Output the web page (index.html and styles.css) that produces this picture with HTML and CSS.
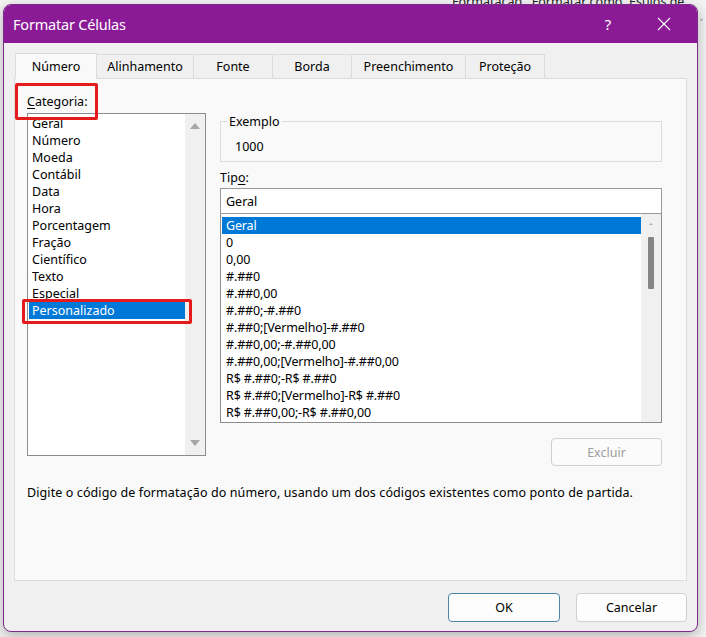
FILE: index.html
```html
<!DOCTYPE html>
<html lang="pt-BR">
<head>
<meta charset="utf-8">
<title>Formatar Células</title>
<link rel="stylesheet" href="styles.css">
</head>
<body>
<div class="ribbon-bg">
  <span class="rb-text">Formatação&nbsp;&nbsp; Formatar como&nbsp; Estilos de</span>
  <span class="rb-caret">˅</span>
</div>

<div class="window">
  <div class="titlebar">
    <span class="title">Formatar Células</span>
    <span class="tb-help">?</span>
    <span class="tb-close">
      <svg width="14" height="14" viewBox="0 0 14 14"><path d="M1 1 L13 13 M13 1 L1 13" stroke="#fff" stroke-width="1.1" fill="none"/></svg>
    </span>
  </div>

  <div class="client">
    <div class="tabs">
      <div class="tab tab-active">Número</div>
      <div class="tab tab-w97">Alinhamento</div>
      <div class="tab">Fonte</div>
      <div class="tab">Borda</div>
      <div class="tab tab-w114">Preenchimento</div>
      <div class="tab">Proteção</div>
    </div>

    <div class="panel">
      <div class="row">
        <div class="left-col">
          <div class="label"><u>C</u>ategoria:</div>
          <div class="cat-list">
            <div class="cat-viewport">
              <div class="item cat-first">Geral</div>
              <div class="item">Número</div>
              <div class="item">Moeda</div>
              <div class="item">Contábil</div>
              <div class="item">Data</div>
              <div class="item">Hora</div>
              <div class="item">Porcentagem</div>
              <div class="item">Fração</div>
              <div class="item">Científico</div>
              <div class="item">Texto</div>
              <div class="item">Especial</div>
              <div class="item item-sel cat-sel">Personalizado</div>
            </div>
            <div class="cat-scroll">
              <span class="arrow-up"></span>
              <span class="arrow-down"></span>
            </div>
          </div>
        </div>

        <div class="right-col">
          <fieldset class="group">
            <legend class="legend">Exemplo</legend>
            <div class="example-value">1000</div>
          </fieldset>

          <div class="label tipo-label">Tip<u>o</u>:</div>
          <div class="input">Geral</div>
          <div class="type-list">
            <div class="type-viewport">
              <div class="item item-sel">Geral</div>
              <div class="item">0</div>
              <div class="item">0,00</div>
              <div class="item">#.##0</div>
              <div class="item">#.##0,00</div>
              <div class="item">#.##0;-#.##0</div>
              <div class="item">#.##0;[Vermelho]-#.##0</div>
              <div class="item">#.##0,00;-#.##0,00</div>
              <div class="item">#.##0,00;[Vermelho]-#.##0,00</div>
              <div class="item">R$ #.##0;-R$ #.##0</div>
              <div class="item">R$ #.##0;[Vermelho]-R$ #.##0</div>
              <div class="item">R$ #.##0,00;-R$ #.##0,00</div>
            </div>
            <div class="type-scroll">
              <span class="mini-up"></span>
              <span class="thumb"></span>
            </div>
          </div>
          <div class="excluir-row">
            <div class="btn btn-disabled">Excluir</div>
          </div>
        </div>
      </div>

      <div class="desc">Digite o código de formatação do número, usando um dos códigos existentes como ponto de partida.</div>

      <div class="mark mark-cat"></div>
      <div class="mark mark-pers"></div>
    </div>

    <div class="buttons">
      <div class="btn btn-default">OK</div>
      <div class="btn">Cancelar</div>
    </div>
  </div>
</div>
</body>
</html>
```

FILE: styles.css
```css
html, body {
  margin: 0;
  padding: 0;
}
body {
  width: 706px;
  height: 637px;
  background: #f4f4f4;
  position: relative;
  overflow: hidden;
  font-family: "Noto Sans", "Open Sans", sans-serif;
  font-size: 12.5px;
  color: #000;
}

.ribbon-bg {
  position: absolute;
  left: 0;
  top: 0;
  width: 706px;
  height: 40px;
}
.rb-text {
  position: absolute;
  left: 452px;
  top: -7px;
  font-size: 12.5px;
  color: #222;
  white-space: nowrap;
}
.rb-caret {
  position: absolute;
  left: 700px;
  top: 16px;
  font-size: 10px;
  color: #444;
}

.window {
  position: absolute;
  left: 3px;
  top: 4px;
  width: 693px;
  height: 626px;
  border: 1px solid #7d2a8a;
  border-radius: 8px;
  background: #f0f0f0;
  box-shadow: 0 4px 14px rgba(0, 0, 0, 0.28);
  overflow: hidden;
  display: flex;
  flex-direction: column;
}

.titlebar {
  height: 38px;
  background: #8b1a97;
  display: flex;
  align-items: center;
  color: #fff;
  flex-shrink: 0;
}
.title {
  font-size: 14.5px;
  margin-left: 9px;
  letter-spacing: -0.2px;
  flex: 1;
}
.tb-help {
  font-size: 15px;
  width: 20px;
  text-align: center;
  margin-right: 36px;
}
.tb-close {
  display: flex;
  align-items: center;
  justify-content: center;
  width: 20px;
  margin-right: 23px;
}

.client {
  flex: 1;
  display: flex;
  flex-direction: column;
  padding: 10px 10px 10px 10px;
}

.tabs {
  display: flex;
  padding-left: 1px;
  height: 25px;
  position: relative;
  z-index: 2;
}
.tab {
  width: 80px;
  height: 24px;
  box-sizing: border-box;
  border: 1px solid #dcdcdc;
  border-bottom: none;
  margin-right: -1px;
  background: #f0f0f0;
  display: flex;
  align-items: center;
  justify-content: center;
  font-size: 12.5px;
  margin-top: 1px;
}
.tab-w97 { width: 98px; }
.tab-w114 { width: 115px; }
.tab-active {
  background: #f9f9f9;
  height: 26px;
  margin-top: 0;
  width: 82px;
}

.panel {
  position: relative;
  height: 503px;
  box-sizing: border-box;
  border: 1px solid #dcdcdc;
  background: #f9f9f9;
  padding: 14px 0 0 12px;
}

.row {
  display: flex;
  gap: 14px;
}

.left-col {
  width: 179px;
}
.label {
  line-height: 17px;
  height: 17px;
}
.label u {
  text-decoration-thickness: 1px;
  text-underline-offset: 2px;
}

.cat-list {
  margin-top: 3px;
  height: 343px;
  box-sizing: border-box;
  border: 1px solid #8c8c8c;
  background: #fff;
  display: flex;
}
.cat-viewport {
  flex: 1;
  overflow: hidden;
  padding-top: 5px;
  display: flex;
  flex-direction: column;
  align-items: flex-start;
  clip-path: inset(5px 0 0 0);
}
.item {
  line-height: 17px;
  height: 17px;
  padding-left: 4px;
  white-space: nowrap;
  align-self: stretch;
}
.cat-first {
  margin-top: -4px;
}
.item-sel {
  background: #0078d7;
  color: #fff;
}
.cat-sel {
  margin-left: 1px;
  padding-left: 3px;
}
.cat-scroll {
  width: 20px;
  background: #f0f0f0;
  display: flex;
  flex-direction: column;
  justify-content: space-between;
  align-items: center;
  padding: 9px 0 9px 0;
}
.arrow-up {
  width: 0;
  height: 0;
  border-left: 5px solid transparent;
  border-right: 5px solid transparent;
  border-bottom: 6px solid #a6a6a6;
}
.arrow-down {
  width: 0;
  height: 0;
  border-left: 5px solid transparent;
  border-right: 5px solid transparent;
  border-top: 6px solid #a6a6a6;
}

.right-col {
  width: 442px;
  padding-top: 20px;
}
.group {
  margin: 0;
  padding: 8px 6px 5px 6px;
  border: 1px solid #dcdcdc;
  height: 49px;
  box-sizing: border-box;
}
.legend {
  padding: 0 2px;
  line-height: 17px;
}
.example-value {
  line-height: 17px;
  padding-left: 8px;
}
.tipo-label {
  margin-top: 7px;
}
.input {
  margin-top: 2px;
  height: 26px;
  box-sizing: border-box;
  border: 1px solid #9a9a9a;
  background: #fff;
  padding-left: 5px;
  line-height: 25px;
}
.type-list {
  height: 209px;
  box-sizing: border-box;
  border: 1px solid #8c8c8c;
  border-top: none;
  background: #fff;
  display: flex;
}
.type-viewport {
  flex: 1;
  overflow: hidden;
  padding: 3px 0 0 1px;
  display: flex;
  flex-direction: column;
}
.type-viewport .item {
  letter-spacing: -0.15px;
}
.type-scroll {
  width: 20px;
  background: #f0f0f0;
  display: flex;
  flex-direction: column;
  align-items: center;
  padding-top: 9px;
}
.mini-up {
  width: 0;
  height: 0;
  border-left: 2px solid transparent;
  border-right: 2px solid transparent;
  border-bottom: 2px solid #b0b0b0;
}
.thumb {
  margin-top: 12px;
  width: 6px;
  height: 52px;
  background: #858585;
  border-radius: 1px;
}

.excluir-row {
  display: flex;
  justify-content: flex-end;
  margin-top: 15px;
}

.btn {
  width: 111px;
  height: 29px;
  box-sizing: border-box;
  border: 1px solid #d0d0d0;
  border-radius: 4px;
  background: #fdfdfd;
  display: flex;
  align-items: center;
  justify-content: center;
  font-size: 12.5px;
}
.btn-disabled {
  color: #9d9d9d;
  background: #fbfbfb;
  height: 28px;
}
.btn-default {
  border-color: #4b86a8;
  width: 112px;
}

.desc {
  margin-top: 18px;
  line-height: 17px;
  letter-spacing: 0.1px;
}

.buttons {
  display: flex;
  justify-content: flex-end;
  gap: 16px;
  margin-top: 12px;
  padding-right: 0;
}

.mark {
  position: absolute;
  border: 3px solid #e51b1b;
  border-radius: 2px;
  box-sizing: border-box;
}
.mark-cat {
  left: 0px;
  top: 4px;
  width: 83px;
  height: 37px;
}
.mark-pers {
  left: 7px;
  top: 220px;
  width: 170px;
  height: 25px;
}
```
